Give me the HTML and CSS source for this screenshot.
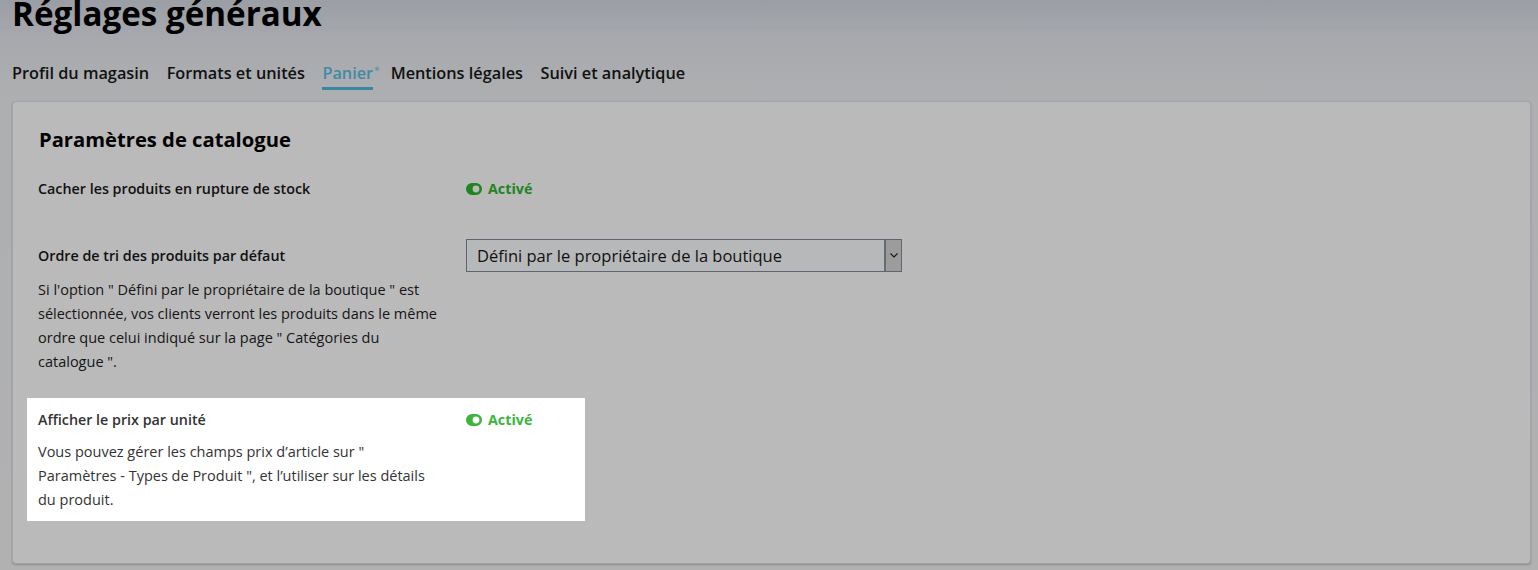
FILE: index.html
```html
<!DOCTYPE html>
<html lang="fr">
<head>
<meta charset="utf-8">
<title>Réglages généraux</title>
<link rel="stylesheet" href="styles.css">
</head>
<body>
<div class="page">
  <h1 class="title">Réglages généraux</h1>
  <nav class="tabs">
    <a class="tab">Profil du magasin</a>
    <a class="tab">Formats et unités</a>
    <a class="tab tab-active">Panier<span class="tab-mark">*</span></a>
    <a class="tab">Mentions légales</a>
    <a class="tab">Suivi et analytique</a>
  </nav>
  <section class="card">
    <h2 class="card-title">Paramètres de catalogue</h2>

    <div class="row row-first">
      <div class="row-main">
        <div class="label">Cacher les produits en rupture de stock</div>
      </div>
      <div class="row-value">
        <span class="status">
          <svg class="toggle" viewBox="0 0 16 12" width="16" height="12"><path fill-rule="evenodd" d="M6 0H10A6 6 0 0 1 10 12H6A6 6 0 0 1 6 0ZM10 2.6A3.4 3.4 0 1 0 10 9.4A3.4 3.4 0 1 0 10 2.6Z"/></svg>
          Activé
        </span>
      </div>
    </div>

    <div class="row row-select">
      <div class="row-main">
        <div class="label label-select">Ordre de tri des produits par défaut</div>
        <p class="desc">Si l'option " Défini par le propriétaire de la boutique " est sélectionnée, vos clients verront les produits dans le même ordre que celui indiqué sur la page " Catégories du catalogue ".</p>
      </div>
      <div class="row-value">
        <div class="select">
          <span class="select-text">Défini par le propriétaire de la boutique</span>
          <span class="select-arrow">
            <svg viewBox="0 0 8 5" width="8" height="5"><path d="M0.5 0.5L4 4L7.5 0.5" fill="none" stroke="#111" stroke-width="1.1"/></svg>
          </span>
        </div>
      </div>
    </div>

    <div class="row row-highlight">
      <div class="row-main">
        <div class="label">Afficher le prix par unité</div>
        <p class="desc">Vous pouvez gérer les champs prix d’article sur " Paramètres&nbsp;-&nbsp;Types&nbsp;de&nbsp;Produit&nbsp;", et l’utiliser sur les détails du produit.</p>
      </div>
      <div class="row-value">
        <span class="status">
          <svg class="toggle" viewBox="0 0 16 12" width="16" height="12"><path fill-rule="evenodd" d="M6 0H10A6 6 0 0 1 10 12H6A6 6 0 0 1 6 0ZM10 2.6A3.4 3.4 0 1 0 10 9.4A3.4 3.4 0 1 0 10 2.6Z"/></svg>
          Activé
        </span>
      </div>
    </div>
  </section>
</div>
</body>
</html>
```

FILE: styles.css
```css
* { box-sizing: border-box; }

html, body {
  margin: 0;
  height: 100%;
}

body {
  font-family: "Open Sans", "Noto Sans", sans-serif;
  color: #141414;
  background: linear-gradient(to bottom, #9b9ea5 0px, #a7a9ad 40px, #aeafb1 100px, #b1b1b2 100%);
  overflow: hidden;
}

.page {
  padding: 0 7px 0 12px;
}

.title {
  margin: -6px 0 0;
  font-size: 33.2px;
  line-height: 40px;
  font-weight: 700;
  color: #000;
}

.tabs {
  display: flex;
  gap: 17.5px;
  margin-top: 27px;
}

.tab {
  position: relative;
  font-size: 16.3px;
  line-height: 24px;
  font-weight: 600;
  color: #111;
  padding-bottom: 2px;
  border-bottom: 3px solid transparent;
}

.tab-active {
  color: #3f8ba6;
  border-bottom-color: #3a87a1;
}

.tab-mark {
  position: absolute;
  left: 100%;
  top: -3px;
  font-size: 10px;
  font-weight: 400;
  color: #4b8fa8;
  margin-left: 1px;
}

.card {
  margin-top: 11px;
  background: #bababa;
  border: 1px solid #a1a4a9;
  border-radius: 4px;
  box-shadow: 0 1px 2px rgba(60, 66, 78, 0.35);
  padding: 23px 25px 41px 25px;
  height: 463px;
}

.card-title {
  margin: 0 0 0 1px;
  font-size: 20.2px;
  line-height: 28px;
  font-weight: 700;
  color: #000;
}

.row {
  display: grid;
  grid-template-columns: 428px 436px;
}

.row-first {
  margin-top: 24px;
}

.row-select {
  margin-top: 38px;
}

.label {
  font-size: 14.3px;
  line-height: 24px;
  font-weight: 600;
  color: #111;
}

.label-select {
  margin-top: 5px;
}

.desc {
  margin: 10px 0 0;
  width: 402px;
  font-size: 14.5px;
  line-height: 24px;
  color: #151515;
}

.row-value {
  display: flex;
  align-items: flex-start;
}

.status {
  display: inline-flex;
  align-items: center;
  gap: 6px;
  font-size: 14.3px;
  line-height: 24px;
  font-weight: 700;
  color: #1f851f;
}

.toggle {
  fill: currentColor;
}

.select {
  width: 436px;
  height: 33px;
  display: flex;
  align-items: stretch;
  border: 1px solid #5e6571;
  background: #b7b8b9;
}

.select-text {
  flex: 1;
  padding-left: 10px;
  font-size: 16.5px;
  line-height: 31px;
  color: #111;
}

.select-arrow {
  width: 17px;
  display: flex;
  align-items: center;
  justify-content: center;
  background: #9c9c9d;
  border-left: 2px solid #666b72;
}

.row-highlight {
  margin: 24px 0 0 -11px;
  padding: 10px 11px 9px;
  width: 558px;
  grid-template-columns: 428px 108px;
  background: #fff;
}

.row-highlight .label {
  color: #333;
}

.row-highlight .desc {
  margin-top: 8px;
  color: #333;
}

.row-highlight .status {
  color: #3bb53b;
}
```
